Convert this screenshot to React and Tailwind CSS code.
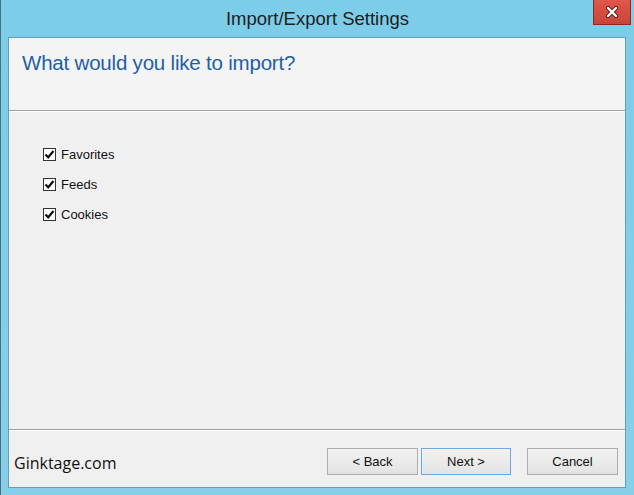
import React from 'react';

const items = ['Favorites', 'Feeds', 'Cookies'];

function CheckBox({ label }) {
    return (
        <label className="flex items-center gap-[5px] h-[13px]">
            <span className="w-[13px] h-[13px] bg-white border border-[#333] flex items-center justify-center">
                <svg width="11" height="11" viewBox="0 0 11 11">
                    <path d="M1.5 5.5 L4.2 8.3 L9.5 2" fill="none" stroke="#111" strokeWidth="2.2" />
                </svg>
            </span>
            <span className="text-[13px] text-[#111]">{label}</span>
        </label>
    );
}

function Button({ children, focused }) {
    return (
        <button
            className={`h-[27px] text-[13px] text-[#111] border bg-gradient-to-b from-[#f2f2f2] to-[#e3e3e3] ${focused ? 'border-[#6fa8dc] w-[90px]' : 'border-[#adadad] w-[91px]'}`}
        >
            {children}
        </button>
    );
}

export default function App() {
    return (
        <div
            className="w-[634px] h-[495px] flex flex-col bg-gradient-to-b from-[#7ccde9] to-[#86cfe8] border-l border-[#4a6f80] overflow-hidden"
            style={{ fontFamily: '"Liberation Sans", Arial, sans-serif' }}
        >
            {/* title bar */}
            <div className="h-[37px] shrink-0 relative flex items-center justify-center">
                <span className="text-[18.5px] text-[#1e1e1e]">Import/Export Settings</span>
                <div className="absolute top-0 right-[3px] w-[38px] h-[25px] bg-gradient-to-b from-[#e0564a] to-[#c8443a] border border-[#8a2a22] border-t-0 flex items-center justify-center">
                    <svg width="14" height="12" viewBox="0 0 14 12">
                        <path d="M3 2 L11 10 M11 2 L3 10" stroke="#5a1a14" strokeWidth="4" strokeLinecap="round" />
                        <path d="M3 2 L11 10 M11 2 L3 10" stroke="#fff" strokeWidth="2.4" strokeLinecap="round" />
                    </svg>
                </div>
            </div>

            {/* dialog body */}
            <div className="ml-[7px] mr-[8px] mb-[7px] flex-1 flex flex-col border border-[#5f9fba] bg-[#f0f0f0]">
                <div className="h-[72px] shrink-0 bg-[#f4f4f4] pl-[13px] pt-[10px]">
                    <h1 className="text-[20.5px] text-[#1f5fa8] tracking-[-0.2px]">What would you like to import?</h1>
                </div>
                <div className="h-[2px] border-t border-[#a0a0a0] border-b border-b-white" />

                <div className="flex-1 flex flex-col gap-[17px] pl-[34px] pt-[36px]">
                    {items.map((it) => (
                        <CheckBox key={it} label={it} />
                    ))}
                </div>

                <div className="h-[2px] border-t border-[#a0a0a0] border-b border-b-white" />
                <div className="h-[56px] shrink-0 flex items-start pt-[17px] pl-[5px] pr-[7px]">
                    <span
                        className="text-[16px] text-[#111] mt-[3px]"
                        style={{ fontFamily: '"Open Sans", sans-serif' }}
                    >
                        Ginktage.com
                    </span>
                    <div className="ml-auto flex">
                        <Button>&lt; Back</Button>
                        <div className="w-[3px]" />
                        <Button focused>Next &gt;</Button>
                        <div className="w-[16px]" />
                        <Button>Cancel</Button>
                    </div>
                </div>
            </div>
        </div>
    );
}
